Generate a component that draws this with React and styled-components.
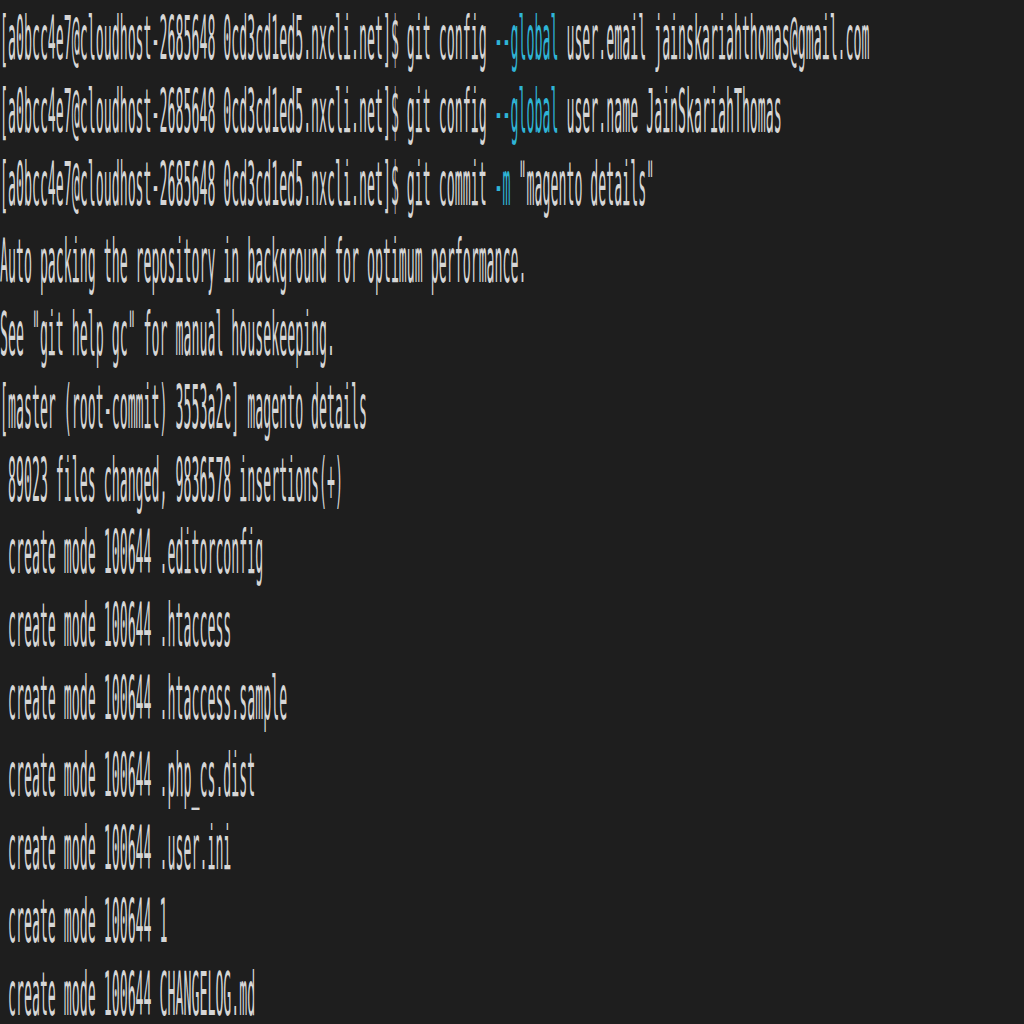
import React from "react";
import styled, { createGlobalStyle } from "styled-components";

const Global = createGlobalStyle`
  html, body {
    margin: 0;
    padding: 0;
    background: #1e1e1e;
    overflow: hidden;
    width: 1024px;
    height: 1024px;
  }
`;

const Viewport = styled.div`
  width: 1024px;
  height: 1024px;
  overflow: hidden;
  background: #1e1e1e;
`;

const Screen = styled.div`
  transform: scaleY(4.55);
  transform-origin: 0 0;
  padding-top: 1.1px;
  font-family: "DejaVu Sans Mono", "Liberation Mono", monospace;
  font-size: 13.25px;
  line-height: 16.145px;
  color: #d6d6d6;
  white-space: pre;
`;

const Line = styled.div`
  height: 16.145px;
`;

const Flag = styled.span`
  color: #2fb4d6;
`;

const prompt = "[a0bcc4e7@cloudhost-2685648 0cd3cd1ed5.nxcli.net]$ ";

const createLines = [
  ".editorconfig",
  ".htaccess",
  ".htaccess.sample",
  ".php_cs.dist",
  ".user.ini",
  "1",
  "CHANGELOG.md",
];

export default function App() {
  return (
    <Viewport>
      <Global />
      <Screen>
        <Line>
          {prompt}git config <Flag>--global</Flag> user.email jainskariahthomas@gmail.com
        </Line>
        <Line>
          {prompt}git config <Flag>--global</Flag> user.name JainSkariahThomas
        </Line>
        <Line>
          {prompt}git commit <Flag>-m</Flag> "magento details"
        </Line>
        <Line>Auto packing the repository in background for optimum performance.</Line>
        <Line>See "git help gc" for manual housekeeping.</Line>
        <Line>[master (root-commit) 3553a2c] magento details</Line>
        <Line> 89023 files changed, 9836578 insertions(+)</Line>
        {createLines.map((f) => (
          <Line key={f}> create mode 100644 {f}</Line>
        ))}
      </Screen>
    </Viewport>
  );
}
